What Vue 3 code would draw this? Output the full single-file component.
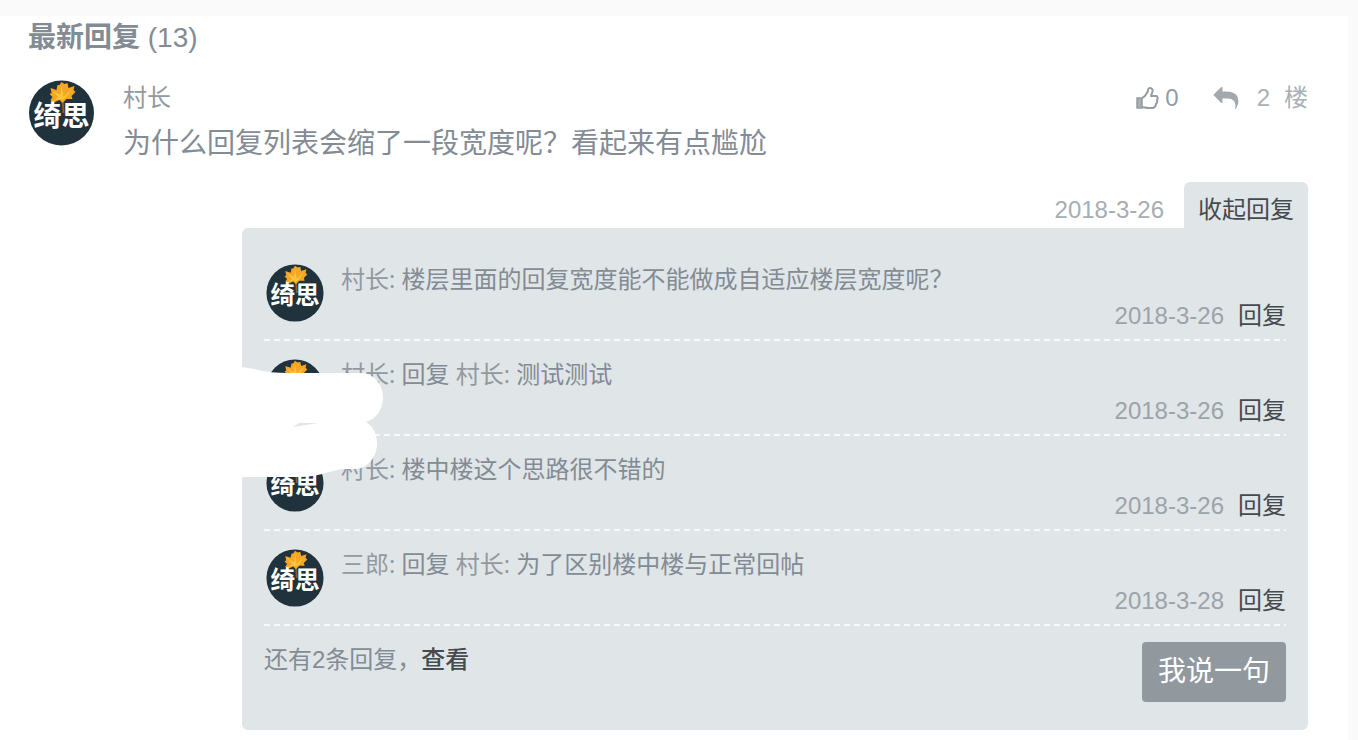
<script setup>
import { h } from 'vue'

const replies = [
  { author: '村长', to: '', text: '楼层里面的回复宽度能不能做成自适应楼层宽度呢？', date: '2018-3-26' },
  { author: '村长', to: '村长', text: '测试测试', date: '2018-3-26' },
  { author: '村长', to: '', text: '楼中楼这个思路很不错的', date: '2018-3-26' },
  { author: '三郎', to: '村长', text: '为了区别楼中楼与正常回帖', date: '2018-3-28' }
]

const AvatarBadge = () =>
  h('svg', { viewBox: '0 0 66 66', role: 'img', 'aria-label': '绮思' }, [
    h('circle', { cx: 33, cy: 33, r: 32.5, fill: '#20323c' }),
    h('path', { d: 'M34 18L35 33', stroke: '#8a5a2b', 'stroke-width': 2 }),
    h('path', {
      d: 'M33 2L36 4L39 3L40 8L46 6L45 10L47 12L43 16L44 19L38 19L34 23L31 20L24 23L22 20L24 17L21 14L23 13L22 8L28 10L29 5L31 5Z',
      fill: '#f5a623'
    }),
    h('path', { d: 'M33 5L35 17L43 9L38 17L34 20L31 19L25 21L30 17L24 11L32 15Z', fill: '#fcc63f' }),
    h('text', {
      x: 33, y: 46, 'text-anchor': 'middle', 'font-size': 28, 'font-weight': 700,
      'font-family': '"Noto Sans CJK SC", sans-serif', fill: '#ffffff'
    }, '绮思')
  ])
</script>

<template>
  <main class="card">
    <h2 class="heading"><span class="heading-label">最新回复</span> (13)</h2>

    <article class="floor">
      <AvatarBadge class="avatar" />
      <div class="floor-main">
        <header class="floor-head">
          <span class="name">村长</span>
          <div class="tools">
            <button class="tool like" type="button" aria-label="赞">
              <svg class="thumb" viewBox="0 0 24 24" aria-hidden="true">
                <path d="M2 12H7V22H2Z" fill="#a9b0b5" stroke="#949ca2" stroke-width="1.5" />
                <path d="M7 12C10 11 12 7 13 5C13 3 13 2 15 2C18 2 18 5 17 7L16 10H21C23 10 23 13 22 14C23 16 22 17 21 18C21 20 20 21 18 22H13C11 22 9 21 7 21" fill="none" stroke="#949ca2" stroke-width="2" stroke-linejoin="round" />
              </svg>
              <span>0</span>
            </button>
            <button class="tool" type="button" aria-label="回复">
              <svg class="arrow" viewBox="0 0 1792 1600" aria-hidden="true">
                <path transform="translate(1792 -60) scale(-1 1)" fill="#a1a9af" d="M1792 640q0 26-19 45l-512 512q-19 19-45 19t-45-19-19-45v-256h-224q-98 0-175.500 6t-154 21.500-133 42.500-105.500 69.500-80 101-48.500 138.500-17.500 181q0 55 5 123 0 6 2.500 23.500t2.500 26.500q0 15-8.500 25t-23.500 10q-16 0-28-17-7-9-13-22t-13.500-30-10.500-24q-127-285-127-451 0-199 53-333 162-403 875-403h224v-256q0-26 19-45t45-19 45 19l512 512q19 19 19 45z" />
              </svg>
            </button>
            <span class="floor-no"><span>2</span><span>楼</span></span>
          </div>
        </header>
        <p class="content">为什么回复列表会缩了一段宽度呢？看起来有点尴尬</p>
      </div>
    </article>

    <div class="floor-foot">
      <time class="date">2018-3-26</time>
      <button class="tab" type="button">收起回复</button>
    </div>

    <section class="panel">
      <ul class="replies">
        <li v-for="(r, i) in replies" :key="i" class="reply">
          <AvatarBadge class="avatar-small" />
          <div class="reply-main">
            <p class="reply-text"><span class="reply-name">{{ r.author }}:</span>{{ r.to ? ' 回复 ' : ' ' }}<span v-if="r.to" class="reply-name">{{ r.to }}:{{ ' ' }}</span>{{ r.text }}</p>
            <div class="reply-meta">
              <time class="date">{{ r.date }}</time>
              <a href="#" class="link">回复</a>
            </div>
          </div>
        </li>
      </ul>
      <footer class="panel-foot">
        <p>还有2条回复，<a href="#" class="link strong">查看</a></p>
        <button class="say" type="button">我说一句</button>
      </footer>
      <svg class="redaction" viewBox="0 0 144 114" aria-hidden="true">
        <path fill="#ffffff" fill-rule="evenodd" d="M0 2L12 4C24 7 34 8 46 8H119C132 8 141 20 141 32C141 45 134 54 124 57C131 61 135 69 135 78C135 93 125 104 112 104H103C92 104 78 112 58 112H0ZM51 62L57 58H76Z" />
      </svg>
    </section>
  </main>
</template>

<style>
body {
  margin: 0;
  background: #fafafa;
}
</style>

<style scoped>
.card {
  box-sizing: border-box;
  min-height: calc(100vh - 16px);
  margin: 16px 10px 0 0;
  padding: 0 40px 10px 28px;
  overflow: hidden;
  background: #fff;
  color: #838b94;
  font-family: "Liberation Sans", "Noto Sans CJK SC", sans-serif;
  font-size: 24px;
  line-height: 36px;
}
p, ul, h2 {
  margin: 0;
  padding: 0;
}
button {
  margin: 0;
  padding: 0;
  border: 0;
  background: none;
  color: inherit;
  font: inherit;
  cursor: pointer;
}
.heading {
  margin-top: 2px;
  font-size: 28px;
  font-weight: 400;
  line-height: 40px;
}
.heading-label {
  font-weight: 700;
}
.floor {
  display: flex;
  gap: 28px;
  margin-top: 22px;
}
.avatar {
  flex: none;
  width: 67px;
  height: 66px;
}
.floor-main {
  flex: 1;
  min-width: 0;
}
.floor-head {
  display: flex;
  justify-content: space-between;
}
.name {
  color: #92999f;
}
.tools {
  display: flex;
  align-items: center;
  color: #a9b0b6;
}
.tool {
  display: flex;
  align-items: center;
}
.like {
  gap: 6px;
  margin-right: 34px;
  color: #949ca2;
}
.thumb {
  width: 24px;
  height: 24px;
}
.arrow {
  width: 26px;
  height: 22px;
}
.floor-no {
  display: flex;
  gap: 14px;
  margin-left: 18px;
}
.content {
  margin-top: 8px;
  font-size: 28px;
  line-height: 40px;
}
.floor-foot {
  display: flex;
  align-items: baseline;
  justify-content: flex-end;
  gap: 20px;
  margin-top: 18px;
}
.date {
  color: #a6adb4;
}
.tab {
  padding: 10px 14px 0;
  border-radius: 6px 6px 0 0;
  background: #e0e5e8;
  color: #454a4e;
}
.panel {
  position: relative;
  margin-left: 214px;
  padding: 18px 22px 28px;
  border-radius: 6px 0 6px 6px;
  background: #e0e5e8;
}
.replies {
  list-style: none;
}
.reply {
  display: flex;
  gap: 17px;
  padding: 15px 0 7px 2px;
  background: repeating-linear-gradient(90deg, #f6f9fa 0 6px, transparent 6px 10px) left bottom / 100% 2px no-repeat;
}
.avatar-small {
  flex: none;
  width: 58px;
  height: 58px;
  margin-top: 3px;
}
.reply-main {
  flex: 1;
  min-width: 0;
}
.reply-text {
  font-family: "Open Sans", "Noto Sans CJK SC", sans-serif;
}
.reply-name {
  color: #92999f;
}
.reply-meta {
  display: flex;
  justify-content: flex-end;
  gap: 14px;
  margin-top: 1px;
}
.reply-meta .date {
  color: #9ba3ab;
}
.link {
  color: #454a4e;
  text-decoration: none;
}
.strong {
  font-weight: 500;
}
.panel-foot {
  display: flex;
  align-items: flex-start;
  justify-content: space-between;
  padding-top: 16px;
}
.say {
  padding: 10px 16px;
  border-radius: 4px;
  background: #91999f;
  color: #fff;
  font-size: 28px;
  line-height: 40px;
}
.redaction {
  position: absolute;
  top: 137px;
  left: 0;
  width: 144px;
  height: 114px;
}
</style>
